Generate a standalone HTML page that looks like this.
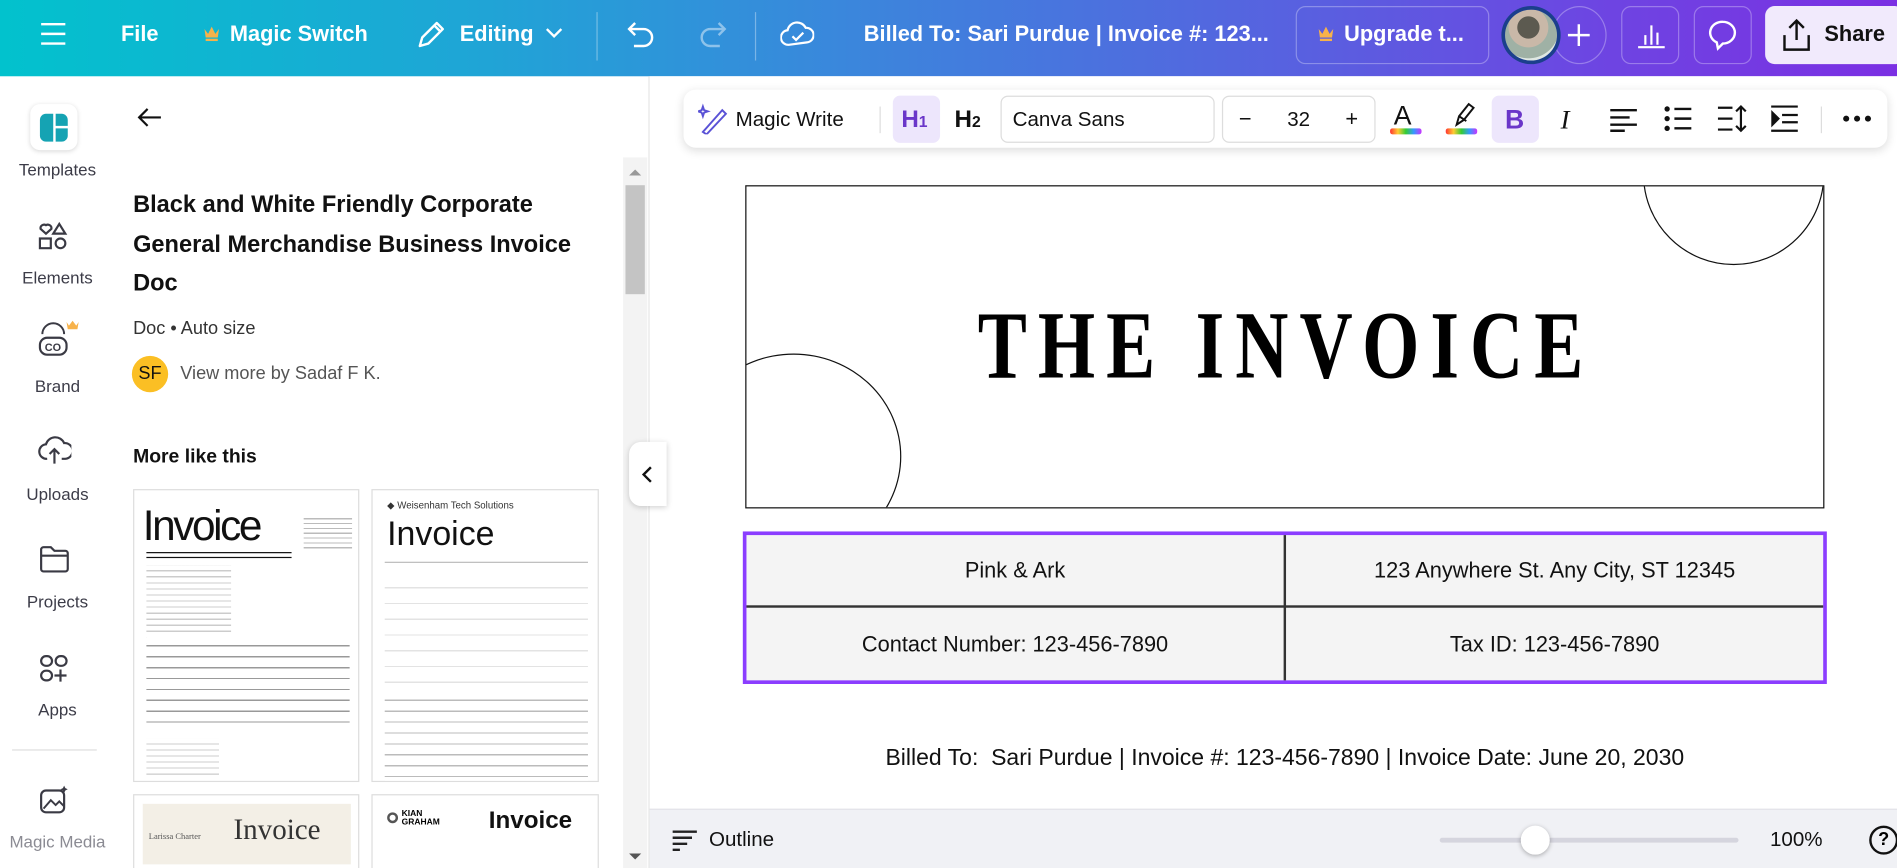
<!DOCTYPE html>
<html><head><meta charset="utf-8">
<style>
*{box-sizing:border-box;margin:0;padding:0}
html,body{width:1897px;height:868px;overflow:hidden;background:#fff;font-family:"Liberation Sans",sans-serif}
#w{position:absolute;left:0;top:0;width:1568px;height:717px;transform:scale(1.20982,1.21060);transform-origin:0 0;overflow:hidden}
.a{position:absolute}
.top{left:0;top:0;width:1568px;height:63px;background:linear-gradient(90deg,#02c2cd 0%,#1fa5d6 25%,#3b86dc 45%,#5a5ee0 70%,#6e44e2 85%,#7b2fe3 100%)}
.tw{color:#fff;font-size:18px;font-weight:bold;top:18px}
.nl{font-size:14px;color:#3c3c48;width:95px;text-align:center;left:0}
.tb{font-size:18px;color:#111}
.cell{position:absolute;display:flex;align-items:center;justify-content:center;font-size:18px;color:#111}
</style></head><body><div id="w">
<div class="a top"></div>
<svg class="a" style="left:33px;top:18px" width="22" height="20"><path d="M1 2h20M1 10h20M1 18h20" stroke="#fff" stroke-width="2"/></svg>
<div class="a tw" style="left:100px">File</div>
<svg class="a" style="left:168px;top:21px" width="14" height="13"><path d="M1 3l3 4 3-6 3 6 3-4-1 7H2z" fill="#f7b24a"/><rect x="2" y="11" width="10" height="2" fill="#f7b24a"/></svg>
<div class="a tw" style="left:190px">Magic Switch</div>
<svg class="a" style="left:343px;top:16px" width="26" height="26"><path d="M4 22l2-7L18 3l5 5-12 12zM16 5l5 5" stroke="#fff" stroke-width="2" fill="none" stroke-linejoin="round"/></svg>
<div class="a tw" style="left:380px">Editing</div>
<svg class="a" style="left:451px;top:23px" width="15" height="10"><path d="M1 1l6 6 6-6" stroke="#fff" stroke-width="2" fill="none"/></svg>
<div class="a" style="left:493px;top:10px;width:1px;height:40px;background:rgba(255,255,255,.35)"></div>
<svg class="a" style="left:517px;top:17px" width="26" height="24"><path d="M8 2L3 7l5 5M3 7h12a7 7 0 010 14H7" stroke="#fff" stroke-width="2" fill="none"/></svg>
<svg class="a" style="left:576px;top:17px" width="26" height="24"><path d="M18 2l5 5-5 5M23 7H11a7 7 0 000 14h8" stroke="rgba(255,255,255,.45)" stroke-width="2" fill="none"/></svg>
<div class="a" style="left:624px;top:10px;width:1px;height:40px;background:rgba(255,255,255,.35)"></div>
<svg class="a" style="left:645px;top:15px" width="28" height="26"><path d="M7 22a6 6 0 01-1-12 8 8 0 0115-2 6 6 0 011 12z" stroke="#fff" stroke-width="1.8" fill="none"/><path d="M10 15l3 3 6-6" stroke="#fff" stroke-width="1.8" fill="none"/></svg>
<div class="a tw" style="left:714px">Billed To: Sari Purdue | Invoice #: 123...</div>
<div class="a" style="left:1071px;top:5px;width:160px;height:48px;border:1px solid rgba(255,255,255,.3);border-radius:8px"></div>
<svg class="a" style="left:1089px;top:21px" width="14" height="13"><path d="M1 3l3 4 3-6 3 6 3-4-1 7H2z" fill="#f7b24a"/><rect x="2" y="11" width="10" height="2" fill="#f7b24a"/></svg>
<div class="a tw" style="left:1111px">Upgrade t...</div>
<div class="a" style="left:1283px;top:5px;width:45px;height:48px;border:1px solid rgba(255,255,255,.3);border-radius:50%"></div>
<div class="a" style="left:1241px;top:5px;width:49px;height:48px;border-radius:50%;background:radial-gradient(circle at 45% 35%,#5c5a50 0 25%,#c9b8a8 26% 45%,#9fb1a5 46% 70%,#dfe7e2 71%);border:3px solid #1b3f8c"></div>
<svg class="a" style="left:1295px;top:19px" width="20" height="20"><path d="M10 1v18M1 10h18" stroke="#fff" stroke-width="2"/></svg>
<div class="a" style="left:1340px;top:5px;width:48px;height:48px;border:1px solid rgba(255,255,255,.3);border-radius:8px"></div>
<svg class="a" style="left:1353px;top:17px" width="24" height="24"><path d="M1 22h22M7 20V12M12 20V4M17 20V10" stroke="#fff" stroke-width="1.8"/></svg>
<div class="a" style="left:1400px;top:5px;width:48px;height:48px;border:1px solid rgba(255,255,255,.3);border-radius:8px"></div>
<svg class="a" style="left:1411px;top:16px" width="26" height="28"><path d="M13 2a10 9 0 00-5 17l1 5 4-4a10 9 0 000-18z" stroke="#fff" stroke-width="2" fill="none"/></svg>
<div class="a" style="left:1459px;top:5px;width:115px;height:48px;background:#f1eafc;border-radius:8px"></div>
<svg class="a" style="left:1472px;top:15px" width="26" height="28"><path d="M13 18V2M7 8l6-6 6 6M3 14v12h20V14" stroke="#111" stroke-width="2" fill="none"/></svg>
<div class="a" style="left:1508px;top:18px;font-size:18px;font-weight:bold;color:#111">Share</div>

<div class="a" style="left:25px;top:86px;width:39px;height:38px;background:#fff;border-radius:8px;box-shadow:0 1px 4px rgba(0,0,0,.15)"></div>
<svg class="a" style="left:32px;top:93px" width="25" height="25"><path d="M6 1h6v23H6a5 5 0 01-5-5V6a5 5 0 015-5z" fill="#15a3b3"/><path d="M14 1h5a5 5 0 015 5v5H14z" fill="#15a3b3"/><path d="M14 13h10v6a5 5 0 01-5 5h-5z" fill="#15a3b3"/></svg>
<div class="a nl" style="top:132px">Templates</div>
<svg class="a" style="left:31px;top:183px" width="26" height="24"><path d="M7 10L2.5 6a3 3 0 014.5-3 3 3 0 014.5 3zM18 2l5 8H13zM2 14h9v8H2z" stroke="#3a3a44" stroke-width="1.8" fill="none"/><circle cx="19" cy="18" r="4" stroke="#3a3a44" stroke-width="1.8" fill="none"/></svg>
<div class="a nl" style="top:221px">Elements</div>
<svg class="a" style="left:31px;top:262px" width="40" height="36"><path d="M4 14a9 9 0 0118 0" stroke="#3a3a44" stroke-width="1.6" fill="none"/><rect x="2" y="17" width="22" height="14" rx="6" stroke="#3a3a44" stroke-width="1.8" fill="none"/><text x="6" y="28" font-size="9" font-weight="bold" fill="#3a3a44" font-family="Liberation Sans">CO</text><path d="M24 4l2 3 3-4 3 4 2-3-1 6h-8z" fill="#f7b24a"/></svg>
<div class="a nl" style="top:311px">Brand</div>
<svg class="a" style="left:31px;top:359px" width="28" height="26"><path d="M8 20a6 6 0 01-1-12 8 8 0 0115-1 6 6 0 011 13h-3M14 24V12M10 16l4-4 4 4" stroke="#3a3a44" stroke-width="1.8" fill="none"/></svg>
<div class="a nl" style="top:400px">Uploads</div>
<svg class="a" style="left:32px;top:450px" width="26" height="24"><path d="M2 4a2 2 0 012-2h6l3 3h9a2 2 0 012 2v13a2 2 0 01-2 2H4a2 2 0 01-2-2zM2 9h22" stroke="#3a3a44" stroke-width="1.8" fill="none"/></svg>
<div class="a nl" style="top:489px">Projects</div>
<svg class="a" style="left:32px;top:540px" width="26" height="26"><rect x="2" y="2" width="9" height="8" rx="4" stroke="#3a3a44" stroke-width="1.8" fill="none"/><rect x="14" y="2" width="9" height="8" rx="4" stroke="#3a3a44" stroke-width="1.8" fill="none"/><rect x="2" y="14" width="9" height="8" rx="4" stroke="#3a3a44" stroke-width="1.8" fill="none"/><path d="M18 13v10M13 18h10" stroke="#3a3a44" stroke-width="1.8"/></svg>
<div class="a nl" style="top:578px">Apps</div>
<div class="a" style="left:10px;top:619px;width:70px;height:1px;background:#ddd"></div>
<svg class="a" style="left:32px;top:648px" width="26" height="26"><rect x="2" y="5" width="19" height="18" rx="4" stroke="#3a3a44" stroke-width="1.8" fill="none"/><path d="M4 20l6-7 4 4 3-3 4 4" stroke="#3a3a44" stroke-width="1.6" fill="none"/><path d="M21 1l1 2 2 1-2 1-1 2-1-2-2-1 2-1z" fill="#3a3a44"/></svg>
<div class="a nl" style="top:687px;color:#8b8b93">Magic Media</div>

<svg class="a" style="left:113px;top:88px" width="22" height="18"><path d="M20 9H2M9 2L2 9l7 7" stroke="#111" stroke-width="1.8" fill="none"/></svg>
<div class="a" style="left:110px;top:153px;font-size:19.5px;font-weight:bold;line-height:32.5px;color:#111;width:378px">Black and White Friendly Corporate General Merchandise Business Invoice Doc</div>
<div class="a" style="left:110px;top:263px;font-size:15px;color:#333">Doc • Auto size</div>
<div class="a" style="left:109px;top:294px;width:30px;height:30px;border-radius:50%;background:#fbbf24;font-size:15px;color:#111;text-align:center;line-height:30px">SF</div>
<div class="a" style="left:149px;top:300px;font-size:15px;color:#555">View more by Sadaf F K.</div>
<div class="a" style="left:110px;top:369px;font-size:16px;font-weight:bold;color:#111">More like this</div>
<div class="a" style="left:110px;top:404px;width:187px;height:242px;border:1px solid #ddd;background:#fff;overflow:hidden">
 <div class="a" style="left:7px;top:10px;font-size:35px;letter-spacing:-2px;color:#111">Invoice</div>
 <div class="a" style="left:10px;top:51px;width:120px;height:1px;background:#111"></div>
 <div class="a" style="left:10px;top:55px;width:120px;height:1px;background:#111"></div>
 <div class="a" style="left:140px;top:20px;width:40px;height:30px;background:repeating-linear-gradient(#fff 0 3px,#bbb 3px 4px)"></div>
 <div class="a" style="left:10px;top:62px;width:70px;height:65px;background:repeating-linear-gradient(#fff 0 4px,#ccc 4px 5px)"></div>
 <div class="a" style="left:10px;top:120px;width:168px;height:75px;background:repeating-linear-gradient(#fff 0 8px,#999 8px 9px)"></div>
 <div class="a" style="left:10px;top:205px;width:60px;height:30px;background:repeating-linear-gradient(#fff 0 4px,#ccc 4px 5px)"></div>
</div>
<div class="a" style="left:307px;top:404px;width:188px;height:242px;border:1px solid #ddd;background:#fff;overflow:hidden">
 <div class="a" style="left:12px;top:8px;font-size:8px;color:#333">◆ Weisenham Tech Solutions</div>
 <div class="a" style="left:12px;top:20px;font-size:28px;color:#111">Invoice</div>
 <div class="a" style="left:10px;top:59px;width:168px;height:1px;background:#bbb"></div>
 <div class="a" style="left:10px;top:68px;width:168px;height:100px;background:repeating-linear-gradient(#fff 0 12px,#e3e3e3 12px 13px)"></div>
 <div class="a" style="left:10px;top:165px;width:168px;height:75px;background:repeating-linear-gradient(#fff 0 8px,#bbb 8px 9px)"></div>
</div>
<div class="a" style="left:110px;top:656px;width:187px;height:70px;border:1px solid #ddd;background:#fff;overflow:hidden">
 <div class="a" style="left:7px;top:7px;width:172px;height:50px;background:#f3efe6"></div>
 <div class="a" style="left:82px;top:16px;font-family:'Liberation Serif',serif;font-size:24px;color:#333">Invoice</div>
 <div class="a" style="left:12px;top:30px;font-family:'Liberation Serif',serif;font-size:7px;color:#555">Larissa Charter</div>
</div>
<div class="a" style="left:307px;top:656px;width:188px;height:70px;border:1px solid #ddd;background:#fff;overflow:hidden">
 <div class="a" style="left:12px;top:14px;width:9px;height:9px;border:2px solid #555;border-radius:50%"></div>
 <div class="a" style="left:24px;top:12px;font-size:7px;font-weight:bold;line-height:7px">KIAN<br>GRAHAM</div>
 <div class="a" style="left:96px;top:10px;font-size:20px;font-weight:bold;color:#111">Invoice</div>
</div>
<div class="a" style="left:515px;top:130px;width:20px;height:587px;background:#f3f3f3"></div>
<div class="a" style="left:517px;top:153px;width:16px;height:90px;background:#c4c4c4"></div>
<svg class="a" style="left:519px;top:138px" width="12" height="8"><path d="M1 7l5-5 5 5z" fill="#999"/></svg>
<svg class="a" style="left:519px;top:704px" width="12" height="8"><path d="M1 1l5 5 5-5z" fill="#555"/></svg>
<div class="a" style="left:536px;top:63px;width:1px;height:654px;background:#e3e3e3"></div>

<div class="a" style="left:537px;top:63px;width:1031px;height:605px;background:#fff"></div>
<div class="a" style="left:520px;top:365px;width:31px;height:53px;background:#fff;border-radius:10px 0 0 10px;box-shadow:0 1px 5px rgba(0,0,0,.18)"></div>
<svg class="a" style="left:530px;top:385px" width="10" height="14"><path d="M8 1L2 7l6 6" stroke="#111" stroke-width="2" fill="none"/></svg>

<div class="a" style="left:565px;top:74px;width:995px;height:48px;background:#fff;border-radius:10px;box-shadow:0 2px 8px rgba(0,0,0,.14)"></div>
<svg class="a" style="left:577px;top:85px" width="26" height="26"><path d="M4 24L20 6l3 3L7 26zM3 6l1-3 1 3 3 1-3 1-1 3-1-3-3-1z" stroke="#5a52d6" stroke-width="1.6" fill="none"/></svg>
<div class="a tb" style="left:608px;top:89px;font-size:17px">Magic Write</div>
<div class="a" style="left:727px;top:88px;width:1px;height:22px;background:#ddd"></div>
<div class="a" style="left:738px;top:79px;width:39px;height:39px;background:#ede6fc;border-radius:6px"></div>
<div class="a" style="left:745px;top:88px;font-size:20px;color:#6a36c9;font-weight:bold">H<span style="font-size:13px">1</span></div>
<div class="a" style="left:789px;top:88px;font-size:20px;color:#111;font-weight:bold">H<span style="font-size:13px">2</span></div>
<div class="a" style="left:827px;top:79px;width:177px;height:39px;border:1px solid #ddd;border-radius:6px"></div>
<div class="a tb" style="left:837px;top:89px;font-size:17px">Canva Sans</div>
<div class="a" style="left:1010px;top:79px;width:127px;height:39px;border:1px solid #ddd;border-radius:6px"></div>
<div class="a tb" style="left:1024px;top:88px">−</div>
<div class="a tb" style="left:1064px;top:89px;font-size:17px">32</div>
<div class="a tb" style="left:1112px;top:88px">+</div>
<div class="a" style="left:1152px;top:83px;font-size:22px;color:#111">A</div>
<div class="a" style="left:1149px;top:106px;width:26px;height:5px;border-radius:2px;background:linear-gradient(90deg,#f33,#fc3,#3c3,#39f,#c3f)"></div>
<svg class="a" style="left:1198px;top:83px" width="22" height="22"><path d="M6 20l2-7 8-10 4 3-8 10zM8 13l6 4" stroke="#111" stroke-width="1.6" fill="none"/></svg>
<div class="a" style="left:1195px;top:106px;width:26px;height:5px;border-radius:2px;background:linear-gradient(90deg,#f33,#fc3,#3c3,#39f,#c3f)"></div>
<div class="a" style="left:1233px;top:79px;width:39px;height:39px;background:#ede6fc;border-radius:6px"></div>
<div class="a" style="left:1244px;top:86px;font-size:22px;font-weight:bold;color:#6a36c9">B</div>
<div class="a" style="left:1290px;top:86px;font-size:22px;font-style:italic;font-family:'Liberation Serif',serif;color:#111">I</div>
<svg class="a" style="left:1330px;top:89px" width="24" height="20"><path d="M1 2h22M1 8h16M1 14h22M1 19h12" stroke="#111" stroke-width="2"/></svg>
<svg class="a" style="left:1375px;top:87px" width="24" height="22"><circle cx="3" cy="3" r="2.2" fill="#111"/><circle cx="3" cy="11" r="2.2" fill="#111"/><circle cx="3" cy="19" r="2.2" fill="#111"/><path d="M9 3h14M9 11h14M9 19h14" stroke="#111" stroke-width="2"/></svg>
<svg class="a" style="left:1419px;top:86px" width="26" height="24"><path d="M1 3h12M1 12h12M1 21h12M20 2v20M16 6l4-4 4 4M16 18l4 4 4-4" stroke="#111" stroke-width="1.8" fill="none"/></svg>
<svg class="a" style="left:1463px;top:86px" width="24" height="24"><path d="M1 2h22M10 9h13M10 15h13M1 22h22M2 7l5 5-5 5z" stroke="#111" stroke-width="1.8" fill="#111"/></svg>
<div class="a" style="left:1505px;top:88px;width:1px;height:22px;background:#ddd"></div>
<svg class="a" style="left:1523px;top:95px" width="26" height="6"><circle cx="3" cy="3" r="2.5" fill="#111"/><circle cx="12" cy="3" r="2.5" fill="#111"/><circle cx="21" cy="3" r="2.5" fill="#111"/></svg>

<div class="a" style="left:616px;top:153px;width:892px;height:267px;border:1.5px solid #111;overflow:hidden;background:#fff">
 <div class="a" style="left:741px;top:-85px;width:150px;height:150px;border:1.3px solid #111;border-radius:50%"></div>
 <div class="a" style="left:-50px;top:138px;width:178px;height:170px;border:1.3px solid #111;border-radius:50%"></div>
 <div class="a" style="left:0;top:92px;width:892px;text-align:center;font-family:'Liberation Serif',serif;font-weight:bold;font-size:80px;line-height:80px;letter-spacing:12px;color:#000;transform:scaleX(.76);transform-origin:446px 0">THE INVOICE</div>
</div>

<div class="a" style="left:614px;top:439px;width:896px;height:126px;border:3px solid #8b3dff;background:#f4f4f4"></div>
<div class="a" style="left:617px;top:500px;width:890px;height:2px;background:#333"></div>
<div class="a" style="left:1061px;top:442px;width:2px;height:120px;background:#333"></div>
<div class="cell" style="left:617px;top:442px;width:444px;height:58px">Pink &amp; Ark</div>
<div class="cell" style="left:1063px;top:442px;width:444px;height:58px">123 Anywhere St. Any City, ST 12345</div>
<div class="cell" style="left:617px;top:502px;width:444px;height:60px">Contact Number: 123-456-7890</div>
<div class="cell" style="left:1063px;top:502px;width:444px;height:60px">Tax ID: 123-456-7890</div>

<div class="a" style="left:616px;top:616px;width:892px;text-align:center;font-size:19px;color:#111;white-space:pre">Billed To:  Sari Purdue | Invoice #: 123-456-7890 | Invoice Date: June 20, 2030</div>

<div class="a" style="left:537px;top:668px;width:1031px;height:49px;background:#f0f1f5;border-top:1px solid #e3e3e8"></div>
<svg class="a" style="left:555px;top:685px" width="22" height="18"><path d="M1 2h20M1 7h16M1 12h12M1 17h6" stroke="#222" stroke-width="2"/></svg>
<div class="a" style="left:586px;top:684px;font-size:17px;color:#111">Outline</div>
<div class="a" style="left:1190px;top:692px;width:247px;height:4px;background:#d5d5de;border-radius:2px"></div>
<div class="a" style="left:1257px;top:682px;width:24px;height:24px;border-radius:50%;background:#fff;box-shadow:0 1px 4px rgba(0,0,0,.3)"></div>
<div class="a" style="left:1463px;top:684px;font-size:17px;color:#111">100%</div>
<div class="a" style="left:1545px;top:682px;width:24px;height:24px;border:2px solid #111;border-radius:50%;font-size:15px;font-weight:bold;text-align:center;line-height:20px">?</div>
</div></body></html>
